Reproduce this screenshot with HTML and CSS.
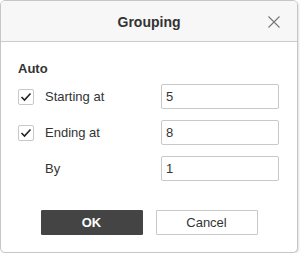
FILE: index.html
```html
<!DOCTYPE html>
<html lang="en">
<head>
    <meta charset="UTF-8">
    <meta name="viewport" content="width=device-width, initial-scale=1.0">
    <title>Grouping</title>
    <link rel="stylesheet" href="styles.css">
</head>
<body>
    <div class="dialog">
        <div class="dialog-header">
            <span class="dialog-title">Grouping</span>
            <button class="close-btn" aria-label="Close">
                <svg width="12" height="12" viewBox="0 0 12 12">
                    <path d="M0.5 0.5 L11.5 11.5 M11.5 0.5 L0.5 11.5" stroke="#777" stroke-width="1.1" fill="none"/>
                </svg>
            </button>
        </div>

        <div class="dialog-body">
            <div class="section-title">Auto</div>

            <div class="rows">
                <div class="row">
                    <span class="checkbox checked">
                        <svg width="12" height="10" viewBox="0 0 12 10">
                            <polyline points="1.5,5 4.5,8 10.5,1.5" stroke="#222" stroke-width="1.6" fill="none"/>
                        </svg>
                    </span>
                    <label>Starting at</label>
                    <input type="text" value="5">
                </div>
                <div class="row">
                    <span class="checkbox checked">
                        <svg width="12" height="10" viewBox="0 0 12 10">
                            <polyline points="1.5,5 4.5,8 10.5,1.5" stroke="#222" stroke-width="1.6" fill="none"/>
                        </svg>
                    </span>
                    <label>Ending at</label>
                    <input type="text" value="8">
                </div>
                <div class="row">
                    <span class="checkbox-space"></span>
                    <label>By</label>
                    <input type="text" value="1">
                </div>
            </div>

            <div class="actions">
                <button class="btn btn-primary">OK</button>
                <button class="btn">Cancel</button>
            </div>
        </div>
    </div>
</body>
</html>
```

FILE: styles.css
```css
body {
    margin: 0;
    background: #fff;
    font-family: "Liberation Sans", Arial, sans-serif;
    font-size: 13px;
    color: #333;
}
.dialog {
    width: 298px;
    height: 253px;
    box-sizing: border-box;
    border: 1px solid #c6c6c6;
    border-radius: 5px;
    overflow: hidden;
    background: #fff;
    box-shadow: 1px 1px 2px rgba(0,0,0,0.12);
}
.dialog-header {
    position: relative;
    height: 40px;
    background: #f7f7f7;
    border-bottom: 1px solid #cbcbcb;
    display: flex;
    align-items: center;
    justify-content: center;
}
.dialog-title {
    font-size: 14px;
    font-weight: bold;
    color: #333;
    padding-top: 2px;
}
.close-btn {
    position: absolute;
    right: 17px;
    top: 15px;
    width: 12px;
    height: 12px;
    padding: 0;
    border: none;
    background: none;
    display: flex;
}
.dialog-body {
    padding: 19px 18px 0 17px;
}
.section-title {
    font-weight: bold;
    line-height: 16px;
}
.rows {
    margin-top: 7px;
    display: flex;
    flex-direction: column;
    gap: 11px;
}
.row {
    display: flex;
    align-items: center;
    height: 25px;
}
.checkbox, .checkbox-space {
    width: 16px;
    height: 16px;
    box-sizing: border-box;
    margin-right: 11px;
    flex-shrink: 0;
}
.checkbox {
    border: 1px solid #c8c8c8;
    border-radius: 2px;
    display: flex;
    align-items: center;
    justify-content: center;
    margin-top: 1px;
}
label {
    flex: 1;
}
input {
    width: 118px;
    height: 25px;
    box-sizing: border-box;
    border: 1px solid #c8c8c8;
    border-radius: 2px;
    padding: 0 4px;
    font-family: inherit;
    font-size: 13px;
    color: #333;
}
.actions {
    margin-top: 29px;
    display: flex;
    justify-content: center;
    gap: 13px;
    padding-left: 1px;
}
.btn {
    width: 102px;
    height: 25px;
    border: 1px solid #c8c8c8;
    background: #fff;
    font-family: inherit;
    font-size: 13px;
    color: #333;
    padding: 0;
    border-radius: 1px;
}
.btn-primary {
    background: #444;
    border-color: #444;
    color: #fff;
    font-weight: bold;
}
```
